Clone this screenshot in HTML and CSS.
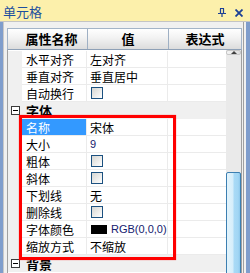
FILE: index.html
```html
<!DOCTYPE html>
<html lang="zh-CN">
<head>
    <meta charset="UTF-8">
    <title>单元格</title>
    <link rel="stylesheet" href="styles.css">
</head>
<body>
    <div class="panel">
        <div class="titlebar">
            <span class="title">单元格</span>
            <span class="tools">
                <svg class="pin" width="8" height="9" viewBox="0 0 8 9">
                    <path d="M2 0.5H6M2.5 0.5V5.5M5.5 0.5V5.5M0 5.5H8M4 5.5V9" stroke="#1c3f95" stroke-width="1.2" fill="none"/>
                </svg>
                <svg class="close" width="8" height="8" viewBox="0 0 8 8">
                    <path d="M0.5 0.5L7.5 7.5M7.5 0.5L0.5 7.5" stroke="#1c3f95" stroke-width="1.8"/>
                </svg>
            </span>
        </div>
        <div class="body">
            <div class="lborder"></div>
            <div class="grid">
                <div class="head">
                    <div class="hc c1">属性名称</div>
                    <div class="hc c2">值</div>
                    <div class="hc c3">表达式</div>
                </div>
                <div class="main">
                    <div class="rows">
                        <div class="row"><div class="gut"></div><div class="nm">水平对齐</div><div class="val">左对齐</div><div class="ex"></div></div>
                        <div class="row"><div class="gut"></div><div class="nm">垂直对齐</div><div class="val">垂直居中</div><div class="ex"></div></div>
                        <div class="row"><div class="gut"></div><div class="nm">自动换行</div><div class="val"><span class="chk"></span></div><div class="ex"></div></div>
                        <div class="row cat"><div class="gut"><span class="minus"></span></div><div class="cname">字体</div></div>
                        <div class="row"><div class="gut"></div><div class="nm sel">名称</div><div class="val">宋体</div><div class="ex"></div></div>
                        <div class="row"><div class="gut"></div><div class="nm">大小</div><div class="val"><span class="latin">9</span></div><div class="ex"></div></div>
                        <div class="row"><div class="gut"></div><div class="nm">粗体</div><div class="val"><span class="chk"></span></div><div class="ex"></div></div>
                        <div class="row"><div class="gut"></div><div class="nm">斜体</div><div class="val"><span class="chk"></span></div><div class="ex"></div></div>
                        <div class="row"><div class="gut"></div><div class="nm">下划线</div><div class="val">无</div><div class="ex"></div></div>
                        <div class="row"><div class="gut"></div><div class="nm">删除线</div><div class="val"><span class="chk"></span></div><div class="ex"></div></div>
                        <div class="row"><div class="gut"></div><div class="nm">字体颜色</div><div class="val"><span class="swatch"></span><span class="latin">RGB(0,0,0)</span></div><div class="ex"></div></div>
                        <div class="row"><div class="gut"></div><div class="nm">缩放方式</div><div class="val">不缩放</div><div class="ex"></div></div>
                        <div class="row cat"><div class="gut"><span class="minus"></span></div><div class="cname">背景</div></div>
                        <div class="mark"></div>
                    </div>
                    <div class="vscroll">
                        <div class="up"><span class="tri"></span></div>
                        <div class="track"><div class="thumb"></div></div>
                    </div>
                </div>
            </div>
            <div class="rborder"></div>
        </div>
    </div>
</body>
</html>
```

FILE: styles.css
```css
body {
    margin: 0;
    font-family: "Noto Sans CJK SC", sans-serif;
    font-size: 12px;
    color: #000;
}
.panel {
    width: 250px;
    height: 273px;
    overflow: hidden;
    display: flex;
    flex-direction: column;
    background: #f0f0f0;
}
.titlebar {
    height: 21px;
    flex: none;
    background: #fcf0ab;
    border-bottom: 1px solid #c4c4c4;
    display: flex;
    align-items: center;
    justify-content: space-between;
    padding: 0 7px 0 3px;
}
.title {
    color: #1d4f9e;
    font-size: 13px;
    line-height: 21px;
    padding-top: 2px;
}
.tools {
    display: flex;
    align-items: center;
    gap: 9px;
    padding-top: 4px;
}
.body {
    flex: 1;
    display: flex;
    padding-top: 6px;
    min-height: 0;
}
.lborder {
    width: 7px;
    flex: none;
    margin-top: -6px;
    background: linear-gradient(to right, #7f9dcc 0, #7f9dcc 3px, #c8c8c8 3px, #c8c8c8 4px, #f0f0f0 4px);
}
.rborder {
    width: 8px;
    flex: none;
    margin-top: -6px;
    background: linear-gradient(to right, #f0f0f0 0, #f0f0f0 1px, #a0a0a0 1px, #a0a0a0 2px, #f0f0f0 2px, #f0f0f0 4px, #7f9dcc 4px);
}
.grid {
    width: 235px;
    flex: none;
    display: flex;
    flex-direction: column;
}
.head {
    height: 22px;
    flex: none;
    display: flex;
    box-sizing: border-box;
    border: 1px solid #a3b4c8;
    border-bottom-color: #8ea0b6;
    background: linear-gradient(#ffffff, #f2f2f2 45%, #dcdcdc);
}
.hc {
    box-sizing: border-box;
    font-weight: bold;
    font-size: 13px;
    line-height: 20px;
    text-align: center;
    border-right: 1px solid #9fb0c4;
}
.c1 { width: 80px; padding-left: 8px; }
.c2 { width: 81px; }
.c3 { flex: 1; border-right: none; padding-left: 0; }
.main {
    flex: 1;
    display: flex;
    min-height: 0;
    border-right: 1px solid #a0a0a0;
}
.rows {
    position: relative;
    width: 219px;
    flex: none;
    box-sizing: border-box;
    border-left: 1px solid #a0a0a0;
    background: #fff;
    padding-top: 1px;
}
.row {
    display: flex;
    height: 17px;
    line-height: 17px;
}
.gut {
    width: 14px;
    flex: none;
    background: #f0f0f0;
    display: flex;
    align-items: center;
    justify-content: center;
}
.nm, .val, .ex {
    box-sizing: border-box;
    border-bottom: 1px solid #ebebeb;
    border-right: 1px solid #ebebeb;
    white-space: nowrap;
    overflow: hidden;
}
.nm { width: 65px; padding-left: 4px; }
.val {
    width: 81px;
    padding-left: 3px;
    display: flex;
    align-items: center;
}
.ex { width: 58px; border-right: none; }
.sel {
    background: #3399ff;
    color: #fff;
}
.cat {
    background: #f0f0f0;
}
.cname {
    font-weight: bold;
    font-size: 13px;
    padding-left: 4px;
}
.minus {
    width: 9px;
    height: 9px;
    box-sizing: border-box;
    border: 1px solid #3a3a3a;
    background: #fff;
    display: flex;
    align-items: center;
    justify-content: center;
}
.minus::after {
    content: "";
    width: 5px;
    height: 1px;
    background: #000;
}
.chk {
    width: 12px;
    height: 12px;
    box-sizing: border-box;
    margin-left: 1px;
    border: 1px solid #1c5180;
    background: linear-gradient(135deg, #d6d6d2, #ffffff);
}
.latin {
    font-family: "Liberation Sans", Arial, sans-serif;
    font-size: 11px;
    color: #14206e;
}
.swatch {
    width: 16px;
    height: 9px;
    margin: 0 4px 0 1px;
    background: #000;
}
.mark {
    position: absolute;
    left: 11px;
    top: 65px;
    width: 157px;
    height: 145px;
    box-sizing: border-box;
    border: 3px solid #ff0000;
    box-shadow: 0 0 1px rgba(255, 0, 0, 0.6);
}
.vscroll {
    width: 15px;
    flex: none;
    display: flex;
    flex-direction: column;
    background: #eaeaea;
}
.up {
    height: 15px;
    box-sizing: border-box;
    border: 1px solid #c6c6c6;
    border-radius: 2px;
    background: linear-gradient(to right, #f4f4f4, #dedede);
    display: flex;
    align-items: center;
    justify-content: center;
}
.tri {
    width: 0;
    height: 0;
    border-left: 3px solid transparent;
    border-right: 3px solid transparent;
    border-bottom: 3px solid #404040;
}
.track {
    flex: 1;
    padding-top: 117px;
}
.thumb {
    height: 120px;
    box-sizing: border-box;
    border: 1px solid #3c7fb1;
    border-radius: 2px 2px 0 0;
    background: linear-gradient(to right, #e3f4fc 0, #d6eefb 45%, #a9daf6 55%, #a2d6f4 85%, #8cc7eb 100%);
}
```
